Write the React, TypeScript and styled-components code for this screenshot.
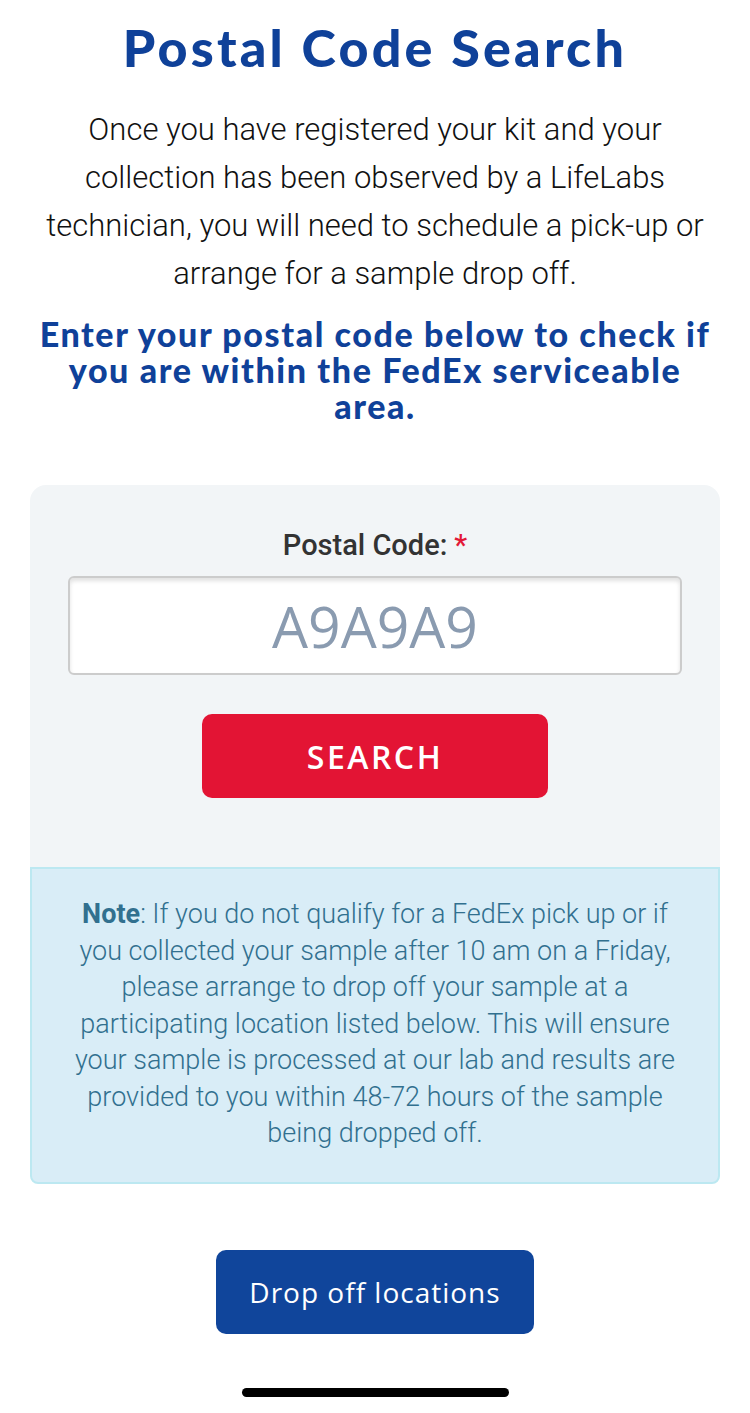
import React from "react";
import styled, { createGlobalStyle } from "styled-components";

const Global = createGlobalStyle`
  html, body { margin: 0; padding: 0; background: #ffffff; }
  body { font-family: Roboto, "Liberation Sans", sans-serif; }
  * { box-sizing: border-box; }
`;

const Page = styled.main`
  width: 750px;
  min-height: 1413px;
  display: flex;
  flex-direction: column;
  align-items: center;
  padding: 17px 30px 0;
  position: relative;
`;

const Title = styled.h1`
  margin: 0;
  font-family: Lato, "Open Sans", sans-serif;
  font-weight: 900;
  font-size: 52px;
  line-height: 60px;
  letter-spacing: 3.2px;
  color: #0f4199;
  text-align: center;
`;

const Intro = styled.p`
  margin: 29px 0 0;
  font-family: Roboto, sans-serif;
  font-weight: 300;
  font-size: 31px;
  line-height: 48px;
  color: #111111;
  text-align: center;
  width: 670px;
`;

const SubHeading = styled.h2`
  margin: 18px 0 0;
  font-family: Lato, "Open Sans", sans-serif;
  font-weight: 900;
  font-size: 34px;
  line-height: 36px;
  letter-spacing: 1.6px;
  color: #0f4199;
  text-align: center;
  width: 686px;
`;

const Panel = styled.section`
  margin-top: 61px;
  width: 690px;
  background: #f2f5f7;
  border-radius: 16px 16px 0 0;
  display: flex;
  flex-direction: column;
  align-items: center;
  padding: 42px 38px 69px;
`;

const Label = styled.label`
  font-family: Roboto, sans-serif;
  font-weight: 500;
  font-size: 29px;
  line-height: 36px;
  color: #333333;
`;

const Required = styled.span`
  color: #e31837;
  margin-left: 7px;
`;

const Input = styled.input`
  margin-top: 13px;
  width: 614px;
  height: 99px;
  border: 2px solid #cccccc;
  border-radius: 6px;
  background: #ffffff;
  box-shadow: inset 0 3px 4px rgba(0, 0, 0, 0.12);
  text-align: center;
  font-family: "Open Sans", sans-serif;
  font-size: 57px;
  color: #333;
  outline: none;
  &::placeholder {
    color: #8a9bb0;
  }
`;

const Button = styled.button<{ $tone: "red" | "blue"; $w: number }>`
  width: ${(p) => p.$w}px;
  height: 84px;
  border: none;
  border-radius: 10px;
  background: ${(p) => (p.$tone === "red" ? "#e31434" : "#10459b")};
  color: #ffffff;
  font-family: "Open Sans", sans-serif;
  font-weight: ${(p) => (p.$tone === "red" ? 600 : 500)};
  font-size: ${(p) => (p.$tone === "red" ? "32px" : "28px")};
  letter-spacing: ${(p) => (p.$tone === "red" ? "2.5px" : "1px")};
  cursor: pointer;
`;

const SearchButton = styled(Button)`
  margin-top: 39px;
`;

const Note = styled.div`
  width: 690px;
  background: #d9edf7;
  border: 2px solid #bce8f1;
  border-radius: 0 0 8px 8px;
  padding: 27px 40px 30px;
  font-family: Roboto, sans-serif;
  font-weight: 300;
  font-size: 27px;
  line-height: 36.5px;
  color: #31708f;
  text-align: center;
`;

const Strong = styled.strong`
  font-weight: 700;
`;

const DropButton = styled(Button)`
  margin-top: 66px;
`;

const HomeIndicator = styled.div`
  position: absolute;
  left: 242px;
  top: 1388px;
  width: 267px;
  height: 9px;
  border-radius: 5px;
  background: #000000;
`;

export default function App() {
  return (
    <>
      <Global />
      <Page>
        <Title>Postal Code Search</Title>
        <Intro>
          Once you have registered your kit and your collection has been
          observed by a LifeLabs technician, you will need to schedule a
          pick-up or arrange for a sample drop off.
        </Intro>
        <SubHeading>
          Enter your postal code below to check if you are within the FedEx
          serviceable area.
        </SubHeading>
        <Panel>
          <Label htmlFor="postal">
            Postal Code:<Required>*</Required>
          </Label>
          <Input id="postal" placeholder="A9A9A9" />
          <SearchButton $tone="red" $w={346}>
            SEARCH
          </SearchButton>
        </Panel>
        <Note>
          <Strong>Note</Strong>: If you do not qualify for a FedEx pick up or
          if you collected your sample after 10 am on a Friday, please arrange
          to drop off your sample at a participating location listed below.
          This will ensure your sample is processed at our lab and results are
          provided to you within 48-72 hours of the sample being dropped off.
        </Note>
        <DropButton $tone="blue" $w={318}>
          Drop off locations
        </DropButton>
        <HomeIndicator />
      </Page>
    </>
  );
}
